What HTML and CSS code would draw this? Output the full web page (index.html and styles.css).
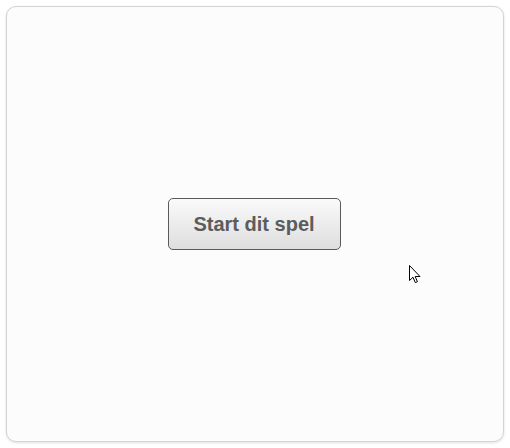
FILE: index.html
```html
<!DOCTYPE html>
<html>
<head>
<meta charset="utf-8">
<link rel="stylesheet" href="styles.css">
</head>
<body>
<div class="panel">
  <button class="start">Start dit spel</button>
</div>
<svg class="cursor" width="12" height="20" viewBox="0 0 12 20">
  <path d="M0.5 0.5 L0.5 15.5 L4 12.2 L6.3 17.6 L8.4 16.7 L6.2 11.5 L11 11.5 Z" fill="#fff" stroke="#000" stroke-width="1" stroke-linejoin="miter"/>
</svg>
</body>
</html>
```
FILE: styles.css
```css
html, body {
  margin: 0;
  padding: 0;
  background: #ffffff;
  width: 510px;
  height: 448px;
  overflow: hidden;
}
body {
  padding: 6px;
  box-sizing: border-box;
  position: relative;
}
.panel {
  width: 498px;
  height: 436px;
  box-sizing: border-box;
  border: 1px solid #d4d4d4;
  border-radius: 10px;
  background: #fcfcfc;
  box-shadow: 0 1px 3px rgba(0,0,0,0.12);
  display: flex;
  align-items: center;
  justify-content: center;
}
.start {
  width: 173px;
  height: 52px;
  margin-left: -2px;
  border: 1px solid #5a5a5a;
  border-radius: 5px;
  background: linear-gradient(#fafafa, #dedede);
  font-family: "Liberation Sans", Arial, sans-serif;
  font-weight: bold;
  font-size: 20px;
  color: #5c5c5c;
  padding: 0;
}
.cursor {
  position: absolute;
  left: 409px;
  top: 265px;
}
```
